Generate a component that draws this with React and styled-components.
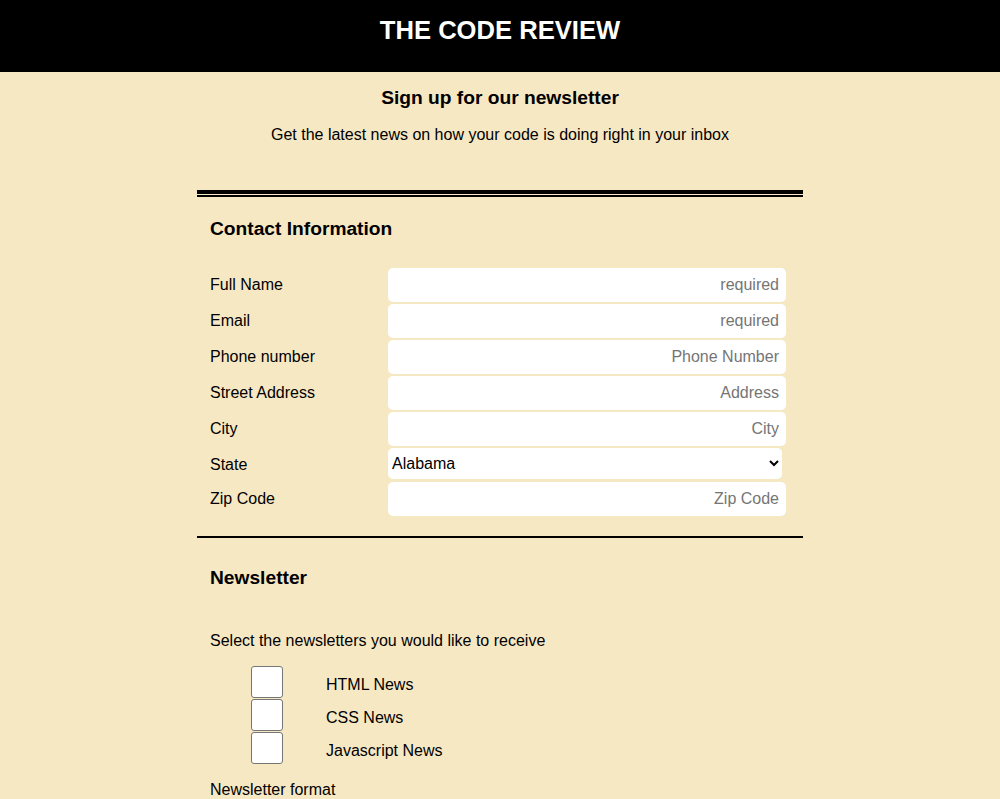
import React from "react";
import styled, { createGlobalStyle } from "styled-components";

const GlobalStyle = createGlobalStyle`
  body {
    margin: 0;
    background: #f7e8c4;
    font-family: "Liberation Sans", Arial, sans-serif;
    color: #000;
  }
  * {
    box-sizing: border-box;
  }
`;

const STATES = [
  "Alabama",
  "Alaska",
  "Arizona",
  "Arkansas",
  "California",
  "Colorado",
  "Connecticut",
  "Delaware",
  "Florida",
  "Georgia",
];

const CONTACT_FIELDS = [
  { id: "name", label: "Full Name", placeholder: "required", type: "text" },
  { id: "email", label: "Email", placeholder: "required", type: "email" },
  { id: "phone", label: "Phone number", placeholder: "Phone Number", type: "tel" },
  { id: "street", label: "Street Address", placeholder: "Address", type: "text" },
  { id: "city", label: "City", placeholder: "City", type: "text" },
];

const NEWSLETTERS = ["HTML News", "CSS News", "Javascript News"];

const App = () => {
  return (
    <>
      <GlobalStyle />
      <Header>
        <h1>THE CODE REVIEW</h1>
      </Header>
      <Intro>
        <h2>Sign up for our newsletter</h2>
        <p>Get the latest news on how your code is doing right in your inbox</p>
      </Intro>
      <Form onSubmit={(e) => e.preventDefault()}>
        <DoubleRule />
        <Section>
          <SectionTitle>Contact Information</SectionTitle>
          <Fields>
            {CONTACT_FIELDS.map((field) => (
              <Row key={field.id}>
                <Label htmlFor={field.id}>{field.label}</Label>
                <TextInput
                  id={field.id}
                  type={field.type}
                  placeholder={field.placeholder}
                />
              </Row>
            ))}
            <Row $select>
              <Label htmlFor="state">State</Label>
              <Select id="state" defaultValue="Alabama">
                {STATES.map((state) => (
                  <option key={state}>{state}</option>
                ))}
              </Select>
            </Row>
            <Row>
              <Label htmlFor="zip">Zip Code</Label>
              <TextInput id="zip" type="text" placeholder="Zip Code" />
            </Row>
          </Fields>
        </Section>
        <SingleRule />
        <Section $second>
          <SectionTitle>Newsletter</SectionTitle>
          <Prompt>Select the newsletters you would like to receive</Prompt>
          <Checklist>
            {NEWSLETTERS.map((item) => (
              <CheckRow key={item}>
                <Checkbox type="checkbox" id={item} />
                <label htmlFor={item}>{item}</label>
              </CheckRow>
            ))}
          </Checklist>
          <Prompt $format>Newsletter format</Prompt>
          <Checklist>
            {["HTML", "Plain text"].map((item) => (
              <CheckRow key={item}>
                <Checkbox type="radio" name="format" id={item} />
                <label htmlFor={item}>{item}</label>
              </CheckRow>
            ))}
          </Checklist>
        </Section>
      </Form>
    </>
  );
};

const Header = styled.header`
  background: #000;
  height: 72px;
  h1 {
    margin: 0;
    color: #fff;
    text-align: center;
    font-size: 25.6px;
    font-weight: bold;
    line-height: 60px;
  }
`;

const Intro = styled.section`
  text-align: center;
  padding-top: 15px;
  h2 {
    margin: 0;
    font-size: 19.2px;
    line-height: 22px;
  }
  p {
    margin: 16px 0 0;
    font-size: 16px;
    line-height: 20px;
  }
`;

const Form = styled.form`
  width: 606px;
  margin: 45px auto 0;
  padding-bottom: 40px;
`;

const DoubleRule = styled.div`
  height: 7px;
  border-top: 4px solid #000;
  border-bottom: 2px solid #000;
`;

const SingleRule = styled.div`
  height: 2px;
  background: #000;
  margin-top: 20px;
`;

const Section = styled.section`
  padding: ${(p) => (p.$second ? "29px" : "21px")} 17px 0 13px;
`;

const SectionTitle = styled.h3`
  margin: 0;
  font-size: 19.2px;
  line-height: 22px;
  font-weight: bold;
`;

const Fields = styled.div`
  margin-top: 28px;
  display: flex;
  flex-direction: column;
  gap: 2px;
`;

const Row = styled.div`
  display: grid;
  grid-template-columns: 178px ${(p) => (p.$select ? "394px" : "1fr")};
  align-items: center;
  margin-bottom: ${(p) => (p.$select ? "1px" : "0")};
  label {
    padding-top: ${(p) => (p.$select ? "2px" : "0")};
  }
`;

const Label = styled.label`
  font-size: 16px;
  line-height: 20px;
`;

const TextInput = styled.input`
  height: 34px;
  width: 100%;
  border: none;
  border-radius: 5px;
  background: #fff;
  padding: 0 7px;
  text-align: right;
  font-family: "Liberation Sans", Arial, sans-serif;
  font-size: 16px;
  outline: none;
  &::placeholder {
    color: #757575;
  }
`;

const Select = styled.select`
  height: 31px;
  width: 100%;
  border: none;
  border-radius: 5px;
  background: #fff;
  padding: 0;
  font-family: "Liberation Sans", Arial, sans-serif;
  font-size: 16px;
  color: #000;
  outline: none;
`;

const Prompt = styled.p`
  margin: ${(p) => (p.$format ? "16px" : "42px")} 0 0;
  font-size: 16px;
  line-height: 20px;
`;

const Checklist = styled.div`
  display: flex;
  flex-direction: column;
  gap: 1px;
  margin-top: 15px;
  padding-left: 41px;
`;

const CheckRow = styled.div`
  display: flex;
  align-items: center;
  gap: 43px;
  font-size: 16px;
  line-height: 20px;
  label {
    padding-top: 6px;
  }
`;

const Checkbox = styled.input`
  appearance: none;
  margin: 0;
  width: 32px;
  height: 32px;
  background: #fff;
  border: 1px solid #767676;
  border-radius: ${(p) => (p.type === "radio" ? "50%" : "3px")};
`;

export default App;
